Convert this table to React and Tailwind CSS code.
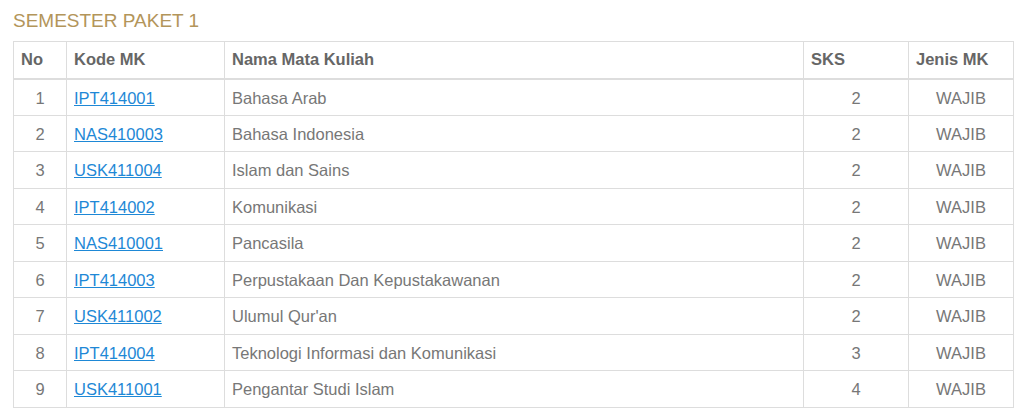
import React from 'react';

const rows = [
  { kode: 'IPT414001', nama: 'Bahasa Arab', sks: 2 },
  { kode: 'NAS410003', nama: 'Bahasa Indonesia', sks: 2 },
  { kode: 'USK411004', nama: 'Islam dan Sains', sks: 2 },
  { kode: 'IPT414002', nama: 'Komunikasi', sks: 2 },
  { kode: 'NAS410001', nama: 'Pancasila', sks: 2 },
  { kode: 'IPT414003', nama: 'Perpustakaan Dan Kepustakawanan', sks: 2 },
  { kode: 'USK411002', nama: "Ulumul Qur'an", sks: 2 },
  { kode: 'IPT414004', nama: 'Teknologi Informasi dan Komunikasi', sks: 3 },
  { kode: 'USK411001', nama: 'Pengantar Studi Islam', sks: 4 },
];

const App = () => {
  return (
    <div className="bg-white w-[1024px] h-[418px] px-[13px] pt-[10px] font-['Liberation_Sans',Arial,sans-serif] text-[#777]">
      <h3 className="text-[19px] leading-[21px] text-[#b3955a] mb-[10px]">SEMESTER PAKET 1</h3>
      <table className="w-[1000px] border-collapse table-fixed text-[16.5px]">
        <colgroup>
          <col className="w-[53px]" />
          <col className="w-[158px]" />
          <col className="w-[579px]" />
          <col className="w-[105px]" />
          <col className="w-[105px]" />
        </colgroup>
        <thead>
          <tr className="h-[37px] text-[#666]">
            <th className="border border-[#ddd] border-b-2 px-[7px] text-left font-bold">No</th>
            <th className="border border-[#ddd] border-b-2 px-[7px] text-left font-bold">Kode MK</th>
            <th className="border border-[#ddd] border-b-2 px-[7px] text-left font-bold">Nama Mata Kuliah</th>
            <th className="border border-[#ddd] border-b-2 px-[7px] text-left font-bold">SKS</th>
            <th className="border border-[#ddd] border-b-2 px-[7px] text-left font-bold">Jenis MK</th>
          </tr>
        </thead>
        <tbody>
          {rows.map((r, i) => (
            <tr key={r.kode} className="h-[36.5px]">
              <td className="border border-[#ddd] px-[7px] pt-[2px] text-center">{i + 1}</td>
              <td className="border border-[#ddd] px-[7px] pt-[2px]">
                <a href="#" className="text-[#1e88d6] underline">{r.kode}</a>
              </td>
              <td className="border border-[#ddd] px-[7px] pt-[2px]">{r.nama}</td>
              <td className="border border-[#ddd] px-[7px] pt-[2px] text-center">{r.sks}</td>
              <td className="border border-[#ddd] px-[7px] pt-[2px] text-center">WAJIB</td>
            </tr>
          ))}
        </tbody>
      </table>
    </div>
  );
};

export default App;
